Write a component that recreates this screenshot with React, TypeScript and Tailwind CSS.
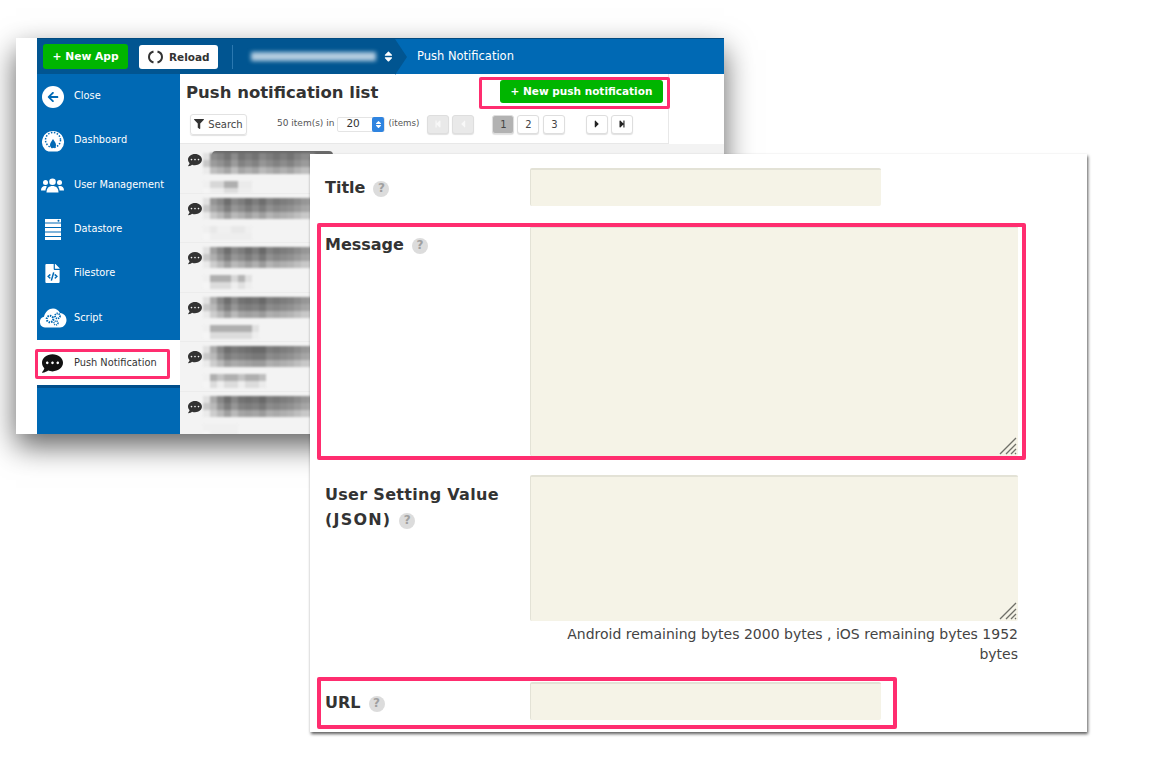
import React from 'react';
import { FaArrowLeft, FaCaretLeft, FaCaretRight, FaCommentDots, FaFileCode, FaFilter, FaSort, FaStepBackward, FaStepForward } from 'react-icons/fa';

const font = "font-['DejaVu_Sans','Liberation_Sans',sans-serif]";

function GaugeIcon() {
  return (
    <svg width="24" height="22" viewBox="0 0 24 22">
      <path d="M12 1a11 11 0 0 0-8 18.500c1.500 1.500 3 2 5 2h6c2 0 3.500-.5 5-2A11 11 0 0 0 12 1z" fill="#fff" />
      <circle cx="12" cy="10" r="7.500" fill="none" stroke="#0069b4" strokeWidth="1.500" strokeDasharray="1.500 1.500" />
      <path d="M12 9c2 3 3 4 3 6a3 3 0 0 1-6 0c0-2 1-3 3-6z" fill="#0069b4" />
    </svg>
  );
}

function PeopleIcon() {
  return (
    <svg width="23" height="15" viewBox="0 0 23 15" fill="#fff">
      <circle cx="4.500" cy="4.500" r="2.500" />
      <path d="M0 12.500c0-3 1.500-4.500 4-4.500 1 0 1.500.3 2 .7-1 1-1.500 2.300-1.500 3.800z" />
      <circle cx="18.500" cy="4.500" r="2.500" />
      <path d="M23 12.500c0-3-1.500-4.500-4-4.500-1 0-1.500.3-2 .7 1 1 1.500 2.300 1.500 3.800z" />
      <circle cx="11.500" cy="3.800" r="3.300" />
      <path d="M5.500 14.500c0-4.500 2.500-6.500 6-6.500s6 2 6 6.500z" />
    </svg>
  );
}

function ServerIcon() {
  return (
    <svg width="16" height="21" viewBox="0 0 16 21" fill="#fff">
      <rect y="0" width="16" height="3.500" />
      <rect y="4.500" width="16" height="3.500" />
      <rect y="9" width="16" height="3.500" />
      <rect y="13.500" width="16" height="3.500" />
      <rect y="18" width="16" height="3" />
      <circle cx="13.500" cy="1.700" r="1" fill="#0069b4" />
    </svg>
  );
}

function CloudCogIcon() {
  return (
    <svg width="28" height="20" viewBox="0 0 28 20">
      <path d="M6 19.500a5.500 5.500 0 0 1-1-10.800C6 4 10 .5 14 .5c3 0 5.500 1.500 7 4.500 4 .2 6.500 3.500 6.500 7 0 4-3 7.500-6.500 7.500z" fill="#fff" />
      <circle cx="11" cy="11" r="3.300" fill="none" stroke="#0069b4" strokeWidth="2" strokeDasharray="1.500 1" />
      <circle cx="18.500" cy="8" r="2.500" fill="none" stroke="#0069b4" strokeWidth="1.800" strokeDasharray="1.300 .8" />
      <circle cx="17" cy="15" r="2" fill="none" stroke="#0069b4" strokeWidth="1.500" strokeDasharray="1 .8" />
    </svg>
  );
}

function ReloadIcon() {
  return (
    <svg width="15" height="14" viewBox="0 0 15 14" fill="none" stroke="#333" strokeWidth="2">
      <path d="M5.500 1.500C2 2.500 1 5 1 7c0 2 1 4.500 4.500 5.500" />
      <path d="M9.500 1.500C13 2.500 14 5 14 7c0 2-1 4.500-4.500 5.500" />
    </svg>
  );
}

function Grip() {
  return (
    <svg width="20" height="20" viewBox="0 0 20 20" className="absolute right-[0px] bottom-[0px]" stroke="#6f6f68" strokeWidth="1.300">
      <path d="M2 18 18 2M8 18 18 8M13 18 18 13M17 18 18 17" />
    </svg>
  );
}

function Help() {
  return (
    <span className="ml-[8px] inline-flex h-4 w-4 items-center justify-center rounded-full bg-[#dcdcdc] align-[1px] text-[12px] font-bold tracking-normal text-[#a0a0a0]">?</span>
  );
}

const sideItems = [
  { name: 'Close', h: 'h-[44px]', icon: <span className="flex h-[22px] w-[22px] items-center justify-center rounded-full bg-white text-[#0069b4]"><FaArrowLeft size={12} /></span> },
  { name: 'Dashboard', h: 'h-[44px]', icon: <GaugeIcon /> },
  { name: 'User Management', h: 'h-[45px]', icon: <PeopleIcon /> },
  { name: 'Datastore', h: 'h-[44px]', icon: <ServerIcon /> },
  { name: 'Filestore', h: 'h-[44px]', icon: <FaFileCode size={19} color="#fff" /> },
  { name: 'Script', h: 'h-[45px]', icon: <CloudCogIcon /> },
];

// pixelated rows of the list, the values are grey levels of each mosaic cell
const rows = [
  { top: [140, 130, 115, 140, 115, 125, 115, 135, 125, 115, 125, 115, 130, 140, 140], sub: [215, 215, 175, 175, 235, 235] },
  { top: [150, 135, 110, 135, 125, 110, 125, 110, 130, 120, 125, 130, 140, 150, 160], sub: [232, 240, 240, 232, 232, 240] },
  { top: [160, 135, 110, 135, 125, 110, 125, 105, 130, 120, 125, 130, 140, 150, 160], sub: [175, 175, 175, 215, 180, 225] },
  { top: [170, 135, 110, 135, 115, 110, 115, 105, 125, 120, 125, 130, 140, 150, 160], sub: [175, 175, 175, 175, 175, 175, 225] },
  { top: [170, 135, 110, 120, 115, 110, 105, 105, 125, 120, 125, 130, 140, 150, 160], sub: [175, 195, 175, 175, 195, 175, 175, 190] },
  { top: [170, 135, 110, 135, 115, 110, 115, 105, 125, 120, 125, 130, 140, 150, 160], sub: [240, 240, 240, 240] },
];

function ListRow({ top, sub, first }: { top: number[]; sub: number[]; first: boolean }) {
  const cell = (g: number, i: number) => (
    <div key={i} className="h-[7px] w-[7px]" style={{ backgroundColor: `rgb(${g},${g},${g})` }} />
  );
  return (
    <div className={`relative flex h-[49.500px] shrink-0 border-b border-[#ececec] pl-[8px] ${first ? 'pt-[9px]' : 'pt-[4px]'}`}>
      {first && <div className="absolute top-[7px] left-[32px] h-[6px] w-[121px] rounded-t-[4px] bg-[#6a6a6a]" />}
      <FaCommentDots size={14} color="#333" className={`shrink-0 ${first ? 'mt-0' : 'mt-[4px]'}`} />
      <div className="relative ml-[1px] overflow-hidden blur-[0.8px]">
        <div className="flex">{cell(225, 0)}{top.map((g, i) => cell(g, i + 1))}</div>
        <div className="flex">{cell(200, 0)}{top.map((g, i) => cell(Math.min(g + 15, 190), i + 1))}</div>
        <div className="flex">{cell(235, 0)}{top.map((g, i) => cell(Math.min(g + 50, 205), i + 1))}</div>
        <div className="flex h-[7px]" />
        <div className="flex">{cell(240, 0)}{sub.map((g, i) => cell(g, i + 1))}</div>
        <div className="flex">{cell(245, 0)}{sub.map((g, i) => cell(Math.min(g + 45, 238), i + 1))}</div>
      </div>
    </div>
  );
}

function PagerButton({ children, className = '' }: { children: React.ReactNode; className?: string }) {
  return (
    <span className={`flex h-[19px] w-[22px] items-center justify-center rounded-[3px] border border-[#dedede] text-[10px] shadow-[0_1px_1px_rgba(0,0,0,.12)] ${className}`}>
      {children}
    </span>
  );
}

function PushList() {
  return (
    <div className="absolute top-[38px] left-[16px] flex h-[396px] w-[708px] bg-white pl-[21px] shadow-[0_12px_28px_rgba(0,0,0,.62)]">
      <div className="flex min-w-0 flex-1 flex-col">
        <header className="flex h-[36px] shrink-0 items-center border-t border-[#014a80] bg-[#0069b4]">
          <div className="relative flex h-full w-[358px] shrink-0 items-center bg-[#015591] pl-[6px]">
            <button className="h-[25px] w-[86px] rounded-[3px] bg-[#00b500] pt-[2px] text-[10.700px] font-bold text-white">+ New App</button>
            <button className="ml-[11px] flex h-[24px] w-[80px] items-center justify-center gap-[6px] rounded-[3px] bg-white text-[10.500px] font-bold text-[#333]"><ReloadIcon /><span className="pt-[2px]">Reload</span></button>
            <div className="ml-[14px] h-[24px] w-px bg-[#2b78b0]" />
            <div className="ml-[18px] h-[9px] w-[126px] rounded-[1px] bg-[#b3cde0] blur-[2px]" />
            <FaSort size={13} color="#fff" className="ml-[6px]" />
            <span className="absolute top-0 right-[-12px] h-0 w-0 border-y-[18px] border-l-[12px] border-y-transparent border-l-[#015591]" />
          </div>
          <span className="ml-[22px] pt-[1px] text-[11.500px] text-white">Push Notification</span>
        </header>
        <div className="flex min-h-0 flex-1">
          <nav className="flex w-[143px] shrink-0 flex-col bg-white">
            <div className="h-[266px] shrink-0 bg-[#0069b4]">
              {sideItems.map((item) => (
                <div key={item.name} className={`flex items-center pt-[1px] ${item.h}`}>
                  <span className="flex w-[30px] shrink-0 items-center justify-center pl-[1px]">{item.icon}</span>
                  <span className="ml-[7px] text-[9.800px] text-white">{item.name}</span>
                </div>
              ))}
            </div>
            <div className="flex h-[45px] shrink-0 items-center pt-[2px]">
              <span className="flex w-[30px] shrink-0 justify-center pl-[1px]"><FaCommentDots size={21} color="#111" /></span>
              <span className="ml-[7px] text-[9.800px] text-[#333]">Push Notification</span>
            </div>
            <div className="flex-1 border-t-[3px] border-[#014f8c] bg-[#0069b4]" />
          </nav>
          <main className="flex min-w-0 flex-1 flex-col bg-white">
            <div className="relative flex h-[39px] w-[489px] shrink-0 items-center border-r border-[#e8e8e8] pl-[6px]">
              <h1 className="text-[16.500px] leading-none font-bold text-[#333]">Push notification list</h1>
              <button className="absolute top-[6px] left-[320px] h-[23px] w-[163px] rounded-[3px] bg-[#00b500] pt-[1px] text-[10.500px] font-bold text-white">+ New push notification</button>
            </div>
            <div className="flex h-[31px] w-[489px] shrink-0 items-center border-r border-b border-[#e8e8e8] pb-[8px] pl-[10px] text-[9px] text-[#555]">
              <span className="flex h-[21px] w-[57px] items-center justify-center gap-[4px] rounded-[3px] border border-[#e2e2e2] text-[10px] text-[#444] shadow-[0_1px_1px_rgba(0,0,0,.12)]"><FaFilter size={10} color="#333" />Search</span>
              <span className="ml-[30px]">50 item(s) in</span>
              <span className="ml-[3px] flex h-[15px] w-[48px] items-center justify-between rounded-[2px] border border-[#e4e4e4] pl-[8px] text-[10.500px] text-[#333]">
                20
                <span className="flex h-[15px] w-[12px] items-center justify-center rounded-[2px] bg-[#2f84e0] text-white"><FaSort size={9} /></span>
              </span>
              <span className="ml-[3px] text-[8.700px]">(items)</span>
              <PagerButton className="ml-[8px] bg-[#e9e9e9] text-[#f8f8f8]"><FaStepBackward size={8} /></PagerButton>
              <PagerButton className="ml-[3px] bg-[#e9e9e9] text-[#f8f8f8]"><FaCaretLeft size={12} /></PagerButton>
              <PagerButton className="ml-[18px] bg-[#b2b2b2] text-[#444]">1</PagerButton>
              <PagerButton className="ml-[3px] bg-white text-[#444]">2</PagerButton>
              <PagerButton className="ml-[4px] bg-white text-[#444]">3</PagerButton>
              <PagerButton className="ml-[21px] bg-white text-[#222]"><FaCaretRight size={12} /></PagerButton>
              <PagerButton className="ml-[3px] bg-white text-[#222]"><FaStepForward size={8} /></PagerButton>
            </div>
            <div className="flex h-full min-h-0 flex-col overflow-hidden bg-[#f3f3f3]">
              {rows.map((r, i) => (
                <ListRow key={i} top={r.top} sub={r.sub} first={i === 0} />
              ))}
            </div>
          </main>
        </div>
      </div>
    </div>
  );
}

const fieldClass = 'rounded-[2px] border-t-2 border-l border-[#e3e2d6] bg-[#f5f3e7]';

function MessageForm() {
  return (
    <div className="absolute top-[154px] left-[310px] h-[578px] w-[777px] bg-white text-[#333] shadow-[1px_2px_3px_rgba(0,0,0,.65)]">
      <div className="ml-[15px] grid grid-cols-[205px_488px] text-[16px] leading-[25px] font-bold">
        <label className="pt-[21px]">Title<Help /></label>
        <div className={`mt-[14px] h-[38px] w-[351px] ${fieldClass}`} />

        <label className="pt-[26px]">Message<Help /></label>
        <div className={`relative mt-[20px] h-[230px] ${fieldClass}`}><Grip /></div>

        <label className="pt-[26px] tracking-[0.3px]">User Setting Value <span className="tracking-[1.2px]">(JSON)</span><Help /></label>
        <div className={`relative mt-[19px] h-[146px] ${fieldClass}`}><Grip /></div>

        <p className="col-start-2 mt-[4px] text-right text-[14px] leading-[19.500px] font-normal text-[#444]">Android remaining bytes 2000 bytes , iOS remaining bytes 1952 bytes</p>

        <label className="pt-[26px]">URL<Help /></label>
        <div className={`mt-[18px] h-[38px] w-[351px] ${fieldClass}`} />
      </div>
    </div>
  );
}

export default function App() {
  return (
    <div className={`relative h-[760px] w-[1166px] overflow-hidden bg-white ${font}`}>
      <PushList />
      <MessageForm />
      {/* red highlight frames laid over the screenshots */}
      <div className="absolute top-[77px] left-[479px] h-[32px] w-[191px] rounded-[2px] border-[3px] border-[#ff2d6f]" />
      <div className="absolute top-[349px] left-[35px] h-[30px] w-[135px] rounded-[2px] border-[3px] border-[#ff2d6f]" />
      <div className="absolute top-[223px] left-[317px] h-[237px] w-[709px] rounded-[2px] border-[4px] border-[#ff2d6f]" />
      <div className="absolute top-[677px] left-[317px] h-[52px] w-[580px] rounded-[2px] border-[4px] border-[#ff2d6f]" />
    </div>
  );
}
